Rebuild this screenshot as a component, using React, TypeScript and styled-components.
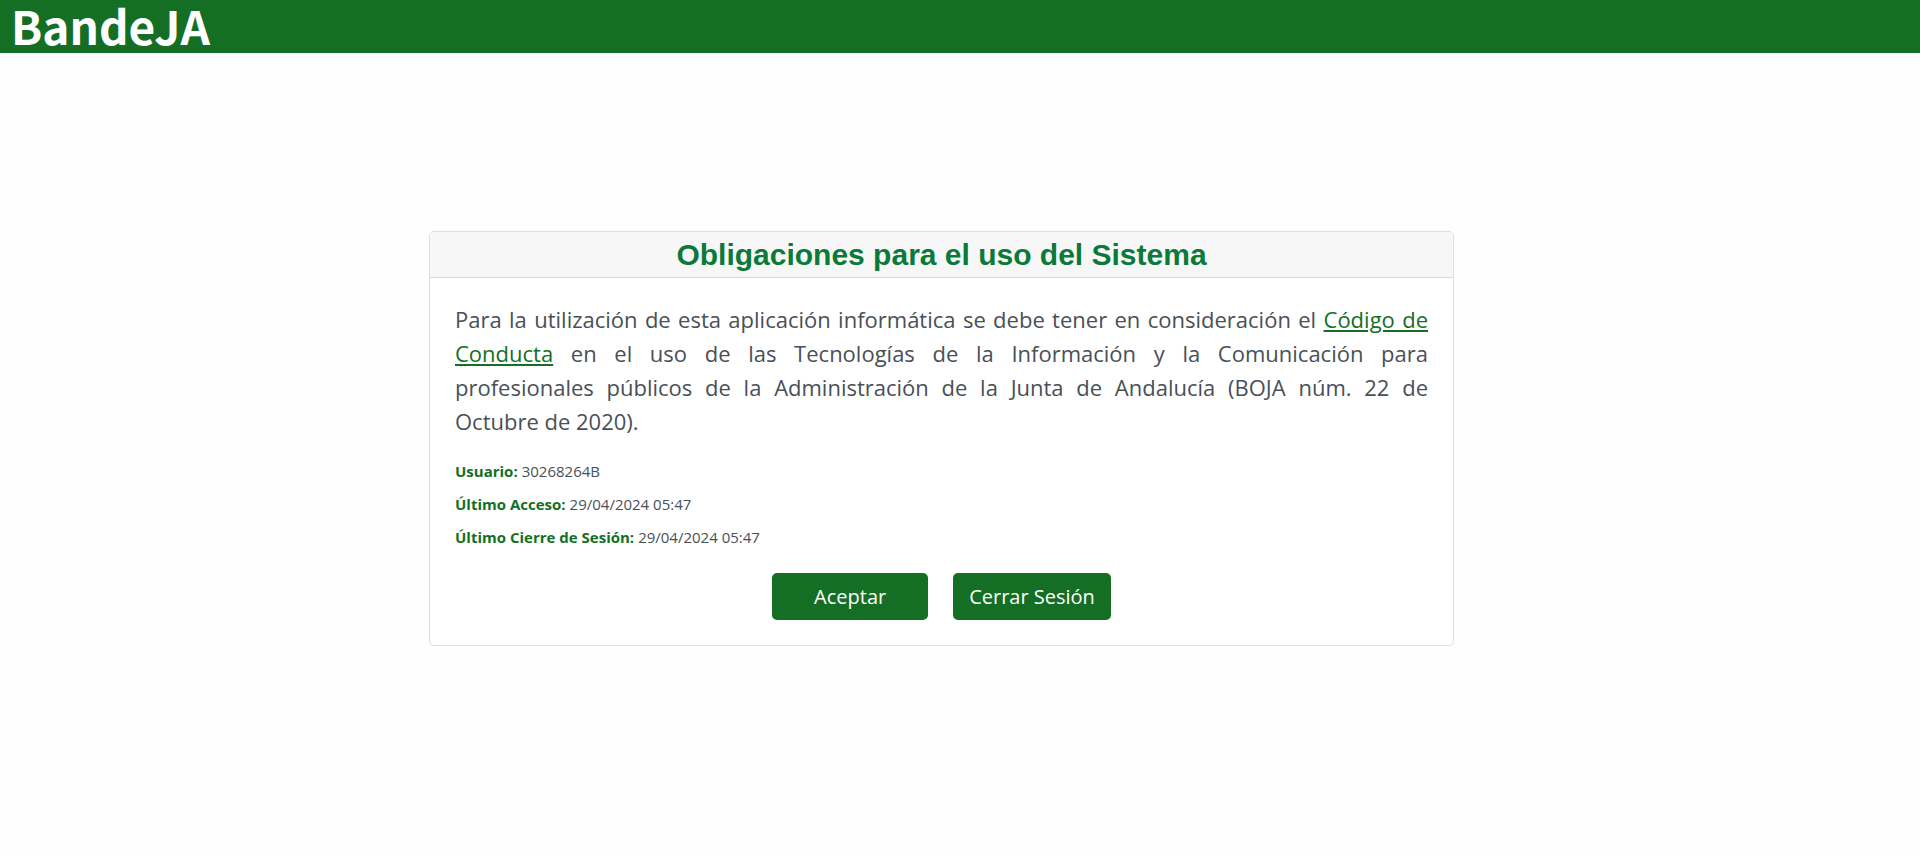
import React from "react";
import styled, { createGlobalStyle } from "styled-components";

const green = "#146f24";

const GlobalStyle = createGlobalStyle`
  *, *::before, *::after { box-sizing: border-box; }
  body {
    margin: 0;
    background: #fefefe;
    color: #495057;
    font-family: "Open Sans", "Liberation Sans", sans-serif;
  }
`;

const TopBar = styled.header`
  display: flex;
  align-items: center;
  height: 53px;
  padding: 0 11px 2px;
  background: ${green};
`;

const Brand = styled.span`
  color: #fff;
  font-family: "Noto Sans CJK JP", "Open Sans", sans-serif;
  font-size: 46px;
  font-weight: 700;
  line-height: 51px;
`;

const Main = styled.main`
  display: flex;
  justify-content: center;
  padding: 178px 52px 40px 15px;
`;

const Card = styled.section`
  width: 100%;
  max-width: 1025px;
  border: 1px solid #dedede;
  border-radius: 5px;
  background: #fff;
  overflow: hidden;
`;

const CardHeader = styled.div`
  padding: 0 24px;
  border-bottom: 1px solid #d8d8d8;
  background: #f7f7f7;
`;

const Title = styled.h1`
  margin: 0;
  color: #0b7a39;
  font-family: "Liberation Sans", Arial, sans-serif;
  font-size: 30px;
  font-weight: 700;
  line-height: 45px;
  text-align: center;
`;

const CardBody = styled.div`
  padding: 24px 25px 25px;
`;

const Notice = styled.p`
  margin: 0 0 23px;
  font-size: 22px;
  line-height: 34px;
  text-align: justify;
`;

const CodeLink = styled.a`
  color: ${green};
  text-decoration: underline;
`;

const Details = styled.dl`
  display: flex;
  flex-direction: column;
  gap: 12px;
  margin: 0 0 25px;
  font-size: 15px;
  line-height: 21px;
`;

const DetailRow = styled.div`
  display: flex;
  gap: 4px;
`;

const Term = styled.dt`
  color: ${green};
  font-weight: 700;
`;

const Value = styled.dd`
  margin: 0;
`;

const Actions = styled.div`
  display: flex;
  justify-content: center;
  gap: 25px;
`;

const Button = styled.button`
  min-width: 156px;
  height: 47px;
  padding: 0 16px;
  border: 0;
  border-radius: 5px;
  background: ${green};
  color: #fff;
  font-family: inherit;
  font-size: 20px;
  line-height: 30px;
  cursor: pointer;
`;

const details = [
  { label: "Usuario:", value: "30268264B" },
  { label: "Último Acceso:", value: "29/04/2024 05:47" },
  { label: "Último Cierre de Sesión:", value: "29/04/2024 05:47" },
];

export default function App() {
  return (
    <>
      <GlobalStyle />
      <TopBar>
        <Brand>BandeJA</Brand>
      </TopBar>
      <Main>
        <Card>
          <CardHeader>
            <Title>Obligaciones para el uso del Sistema</Title>
          </CardHeader>
          <CardBody>
            <Notice>
              Para la utilización de esta aplicación informática se debe tener en consideración el{" "}
              <CodeLink href="#codigo">Código de Conducta</CodeLink> en el uso de las Tecnologías de la
              Información y la Comunicación para profesionales&nbsp;públicos de la Administración de la
              Junta de Andalucía (BOJA núm. 22 de Octubre&nbsp;de&nbsp;2020).
            </Notice>
            <Details>
              {details.map(({ label, value }) => (
                <DetailRow key={label}>
                  <Term>{label}</Term>
                  <Value>{value}</Value>
                </DetailRow>
              ))}
            </Details>
            <Actions>
              <Button type="button">Aceptar</Button>
              <Button type="button">Cerrar Sesión</Button>
            </Actions>
          </CardBody>
        </Card>
      </Main>
    </>
  );
}
